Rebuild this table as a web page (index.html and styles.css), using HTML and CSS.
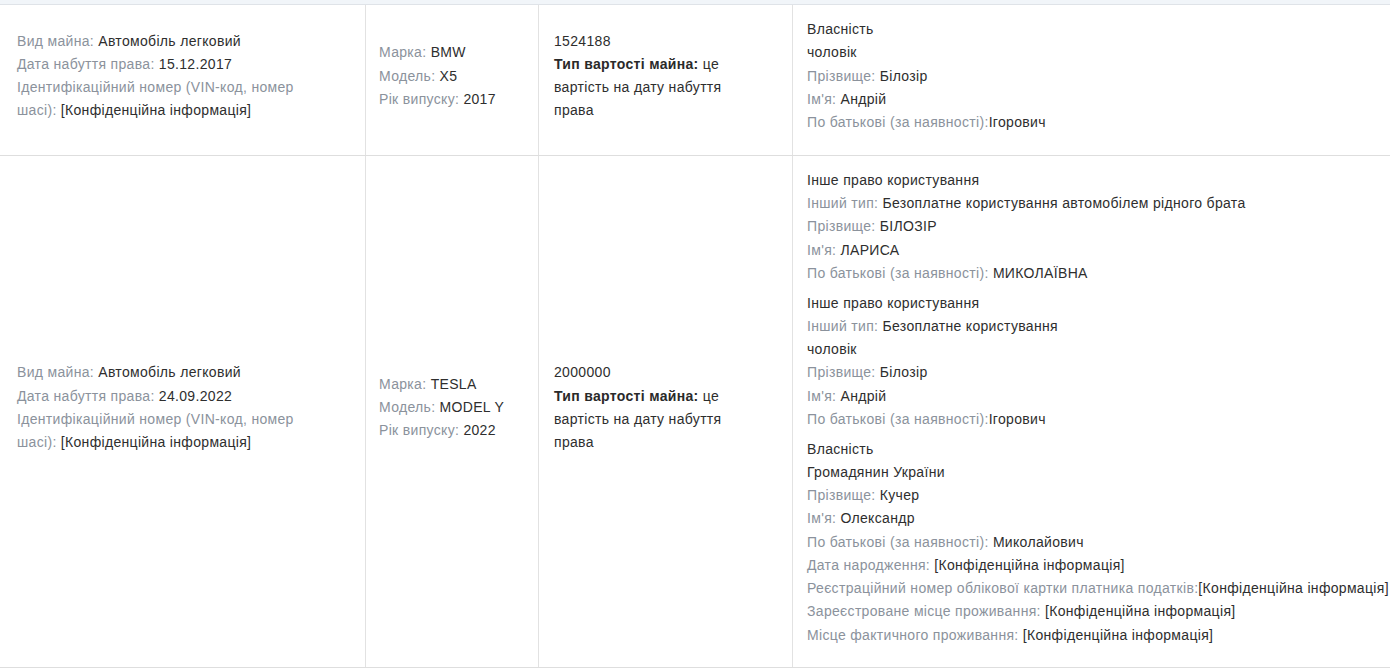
FILE: index.html
```html
<!DOCTYPE html>
<html lang="uk">
<head>
<meta charset="utf-8">
<title>Транспортні засоби</title>
<link rel="stylesheet" href="styles.css">
</head>
<body>
<div class="table">
  <div class="head"></div>
  <div class="row">
    <div class="cell c1">
      <div class="block">
        <div><span class="lbl">Вид майна: </span>Автомобіль легковий</div>
        <div><span class="lbl">Дата набуття права: </span>15.12.2017</div>
        <div><span class="lbl">Ідентифікаційний номер (VIN-код, номер шасі): </span>[Конфіденційна інформація]</div>
      </div>
    </div>
    <div class="cell c2">
      <div class="block">
        <div><span class="lbl">Марка: </span>BMW</div>
        <div><span class="lbl">Модель: </span>X5</div>
        <div><span class="lbl">Рік випуску: </span>2017</div>
      </div>
    </div>
    <div class="cell c3">
      <div class="block narrow">
        <div>1524188</div>
        <div><b>Тип вартості майна:</b> це вартість на дату набуття права</div>
      </div>
    </div>
    <div class="cell c4">
      <div class="block nw">
        <div>Власність</div>
        <div>чоловік</div>
        <div><span class="lbl">Прізвище: </span>Білозір</div>
        <div><span class="lbl">Ім'я: </span>Андрій</div>
        <div><span class="lbl">По батькові (за наявності):</span>Ігорович</div>
      </div>
    </div>
  </div>
  <div class="row">
    <div class="cell c1">
      <div class="block">
        <div><span class="lbl">Вид майна: </span>Автомобіль легковий</div>
        <div><span class="lbl">Дата набуття права: </span>24.09.2022</div>
        <div><span class="lbl">Ідентифікаційний номер (VIN-код, номер шасі): </span>[Конфіденційна інформація]</div>
      </div>
    </div>
    <div class="cell c2">
      <div class="block">
        <div><span class="lbl">Марка: </span>TESLA</div>
        <div><span class="lbl">Модель: </span>MODEL Y</div>
        <div><span class="lbl">Рік випуску: </span>2022</div>
      </div>
    </div>
    <div class="cell c3">
      <div class="block narrow">
        <div>2000000</div>
        <div><b>Тип вартості майна:</b> це вартість на дату набуття права</div>
      </div>
    </div>
    <div class="cell c4">
      <div class="stack">
        <div class="block nw">
          <div>Інше право користування</div>
          <div><span class="lbl">Інший тип: </span>Безоплатне користування автомобілем рідного брата</div>
          <div><span class="lbl">Прізвище: </span>БІЛОЗІР</div>
          <div><span class="lbl">Ім'я: </span>ЛАРИСА</div>
          <div><span class="lbl">По батькові (за наявності): </span>МИКОЛАЇВНА</div>
        </div>
        <div class="block nw">
          <div>Інше право користування</div>
          <div><span class="lbl">Інший тип: </span>Безоплатне користування</div>
          <div>чоловік</div>
          <div><span class="lbl">Прізвище: </span>Білозір</div>
          <div><span class="lbl">Ім'я: </span>Андрій</div>
          <div><span class="lbl">По батькові (за наявності):</span>Ігорович</div>
        </div>
        <div class="block nw">
          <div>Власність</div>
          <div>Громадянин України</div>
          <div><span class="lbl">Прізвище: </span>Кучер</div>
          <div><span class="lbl">Ім'я: </span>Олександр</div>
          <div><span class="lbl">По батькові (за наявності): </span>Миколайович</div>
          <div><span class="lbl">Дата народження: </span>[Конфіденційна інформація]</div>
          <div><span class="lbl">Реєстраційний номер облікової картки платника податків:</span>[Конфіденційна інформація]</div>
          <div><span class="lbl">Зареєстроване місце проживання: </span>[Конфіденційна інформація]</div>
          <div><span class="lbl">Місце фактичного проживання: </span>[Конфіденційна інформація]</div>
        </div>
      </div>
    </div>
  </div>
</div>
</body>
</html>
```

FILE: styles.css
```css
html, body {
  margin: 0;
  padding: 0;
  background: #ffffff;
}

body {
  font-family: "Liberation Sans", Arial, sans-serif;
  font-size: 14px;
  letter-spacing: 0.32px;
  line-height: 23.25px;
  color: #2e2e2e;
}

.table {
  width: 1390px;
  overflow: hidden;
}

.head {
  height: 4px;
  background: #f1f5f9;
  border-bottom: 1px solid #dfe3e8;
}

.row {
  display: grid;
  grid-template-columns: 366px 173px 254px 597px;
  border-bottom: 1px solid #dedede;
}

.cell {
  display: flex;
  align-items: center;
  padding: 13px 15px 14px 15px;
  border-right: 1px solid #e2e2e2;
  min-width: 0;
}

.cell.c1 {
  padding-left: 17px;
  padding-right: 44px;
}

.cell.c2 {
  padding-left: 13px;
}

.cell.c4 {
  border-right: none;
  padding-right: 0;
  padding-left: 14px;
}

.block {
  margin-bottom: 6.5px;
}

.narrow {
  max-width: 190px;
}

.nw > div {
  white-space: nowrap;
}

.lbl {
  color: #8b929c;
}

b {
  font-weight: bold;
  color: #2a2a2a;
}
```
